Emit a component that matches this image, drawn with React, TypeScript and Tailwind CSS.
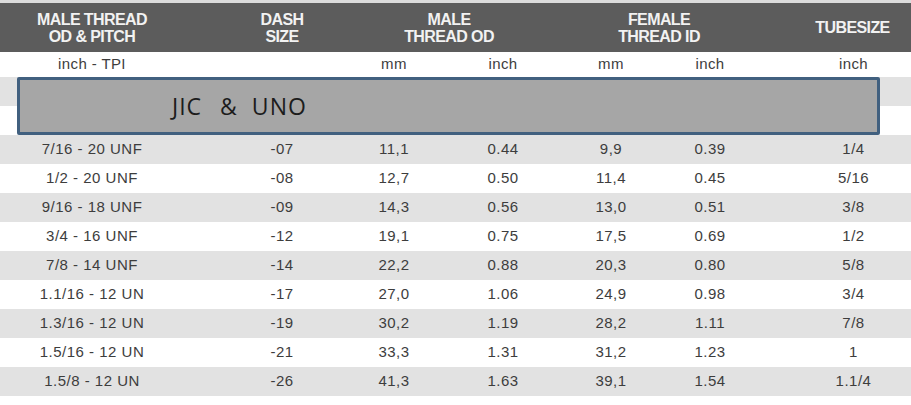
import React from 'react';

const rows: string[][] = [
  ['7/16 - 20 UNF', '-07', '11,1', '0.44', '9,9', '0.39', '1/4'],
  ['1/2 - 20 UNF', '-08', '12,7', '0.50', '11,4', '0.45', '5/16'],
  ['9/16 - 18 UNF', '-09', '14,3', '0.56', '13,0', '0.51', '3/8'],
  ['3/4 - 16 UNF', '-12', '19,1', '0.75', '17,5', '0.69', '1/2'],
  ['7/8 - 14 UNF', '-14', '22,2', '0.88', '20,3', '0.80', '5/8'],
  ['1.1/16 - 12 UN', '-17', '27,0', '1.06', '24,9', '0.98', '3/4'],
  ['1.3/16 - 12 UN', '-19', '30,2', '1.19', '28,2', '1.11', '7/8'],
  ['1.5/16 - 12 UN', '-21', '33,3', '1.31', '31,2', '1.23', '1'],
  ['1.5/8 - 12 UN', '-26', '41,3', '1.63', '39,1', '1.54', '1.1/4'],
];

const units = ['inch - TPI', '', 'mm', 'inch', 'mm', 'inch', 'inch'];

// column centres follow the picture, so the widths are uneven
const grid = 'grid grid-cols-[184px_196px_28px_190px_26px_172px_1fr]';

function Row({ cells, className }: { cells: string[]; className: string }) {
  return (
    <div className={`${grid} ${className}`}>
      {cells.map((c, i) => (
        <div key={i} className="flex justify-center items-center whitespace-nowrap">
          {c}
        </div>
      ))}
    </div>
  );
}

function HeadCell({ className, lines }: { className: string; lines: string[] }) {
  return (
    <div className={`flex flex-col items-center justify-center whitespace-nowrap ${className}`}>
      {lines.map((l) => (
        <span key={l} className="leading-[17px]">
          {l}
        </span>
      ))}
    </div>
  );
}

export default function App() {
  return (
    <div className="relative w-[911px] h-[405px] bg-white overflow-hidden font-['Liberation_Sans',Arial,sans-serif] text-[#3d3d3d]">
      {/* Header */}
      <div className="flex h-[52px] bg-[#5c5c5c] border-t-[3px] border-[#dcdcdc] text-[#f2f2f2] font-bold text-[16px] tracking-[-0.6px]">
        <HeadCell className="w-[184px]" lines={['MALE THREAD', 'OD & PITCH']} />
        <HeadCell className="w-[196px]" lines={['DASH', 'SIZE']} />
        <HeadCell className="w-[138px]" lines={['MALE', 'THREAD OD']} />
        <HeadCell className="w-[282px]" lines={['FEMALE', 'THREAD ID']} />
        <HeadCell className="flex-1 pr-[6px]" lines={['TUBESIZE']} />
      </div>

      {/* Units */}
      <Row cells={units} className="h-[25px] text-[15px] tracking-[0.4px] bg-white" />

      {/* spacer rows behind the label */}
      <div className="h-[29px] bg-[#e2e2e2]" />
      <div className="h-[29px] bg-white" />

      {/* Data */}
      {rows.map((r, i) => (
        <Row
          key={i}
          cells={r}
          className={`h-[29px] text-[15px] tracking-[0.5px] ${i % 2 === 0 ? 'bg-[#e2e2e2]' : 'bg-white'}`}
        />
      ))}

      {/* JIC & UNO label laid over the table */}
      <div className="absolute left-[17px] top-[77px] w-[863px] h-[58px] bg-[#a6a6a6] border-[3px] border-[#41607f] rounded-[2px] flex items-center pl-[152px] text-[23px] text-[#1c1c1c] tracking-[1px] font-['Open_Sans',Arial,sans-serif]">
        <span>JIC</span>
        <span className="ml-[18px]">&amp;</span>
        <span className="ml-[14px]">UNO</span>
      </div>
    </div>
  );
}
